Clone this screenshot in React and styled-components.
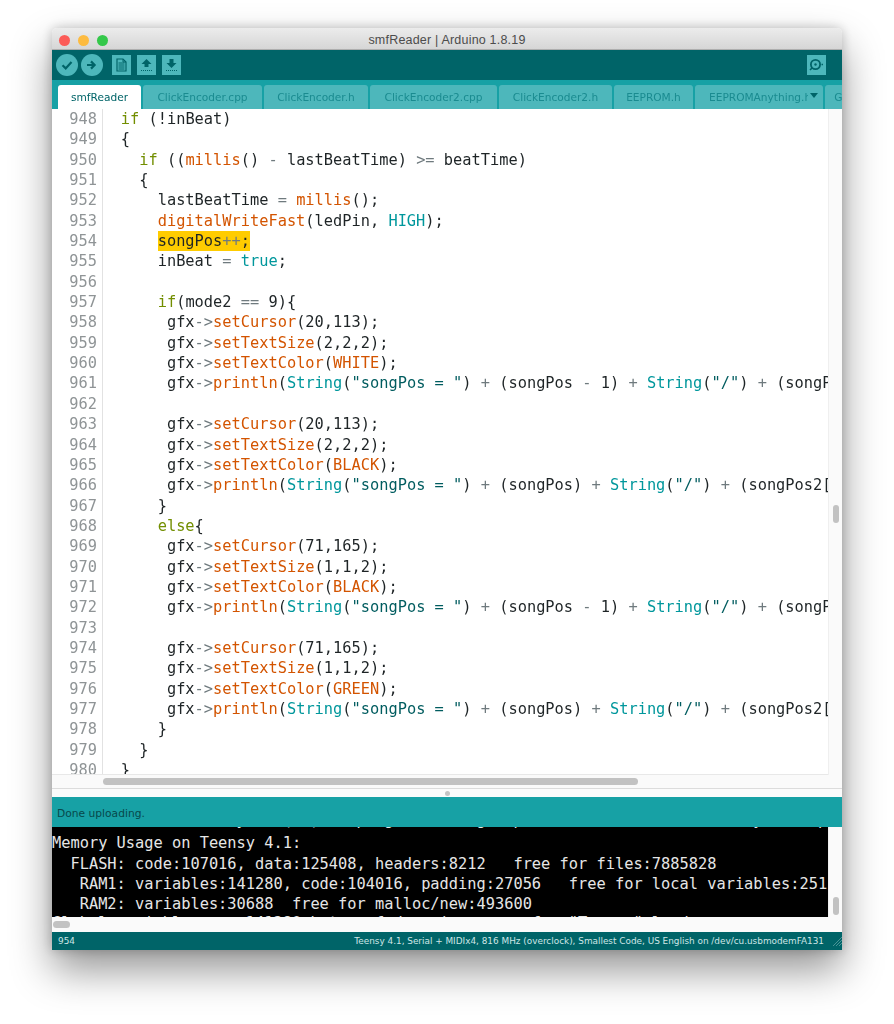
import React from 'react'
import styled, { createGlobalStyle } from 'styled-components'

const GlobalStyle = createGlobalStyle`
  html, body {
    margin: 0;
    background: #fff;
  }
`

const code = [
  '  if (!inBeat)',
  '  {',
  '    if ((millis() - lastBeatTime) >= beatTime)',
  '    {',
  '      lastBeatTime = millis();',
  '      digitalWriteFast(ledPin, HIGH);',
  '      @songPos++;',
  '      inBeat = true;',
  '',
  '      if(mode2 == 9){',
  '       gfx->setCursor(20,113);',
  '       gfx->setTextSize(2,2,2);',
  '       gfx->setTextColor(WHITE);',
  '       gfx->println(String("songPos = ") + (songPos - 1) + String("/") + (songPos2[0] - 1));',
  '',
  '       gfx->setCursor(20,113);',
  '       gfx->setTextSize(2,2,2);',
  '       gfx->setTextColor(BLACK);',
  '       gfx->println(String("songPos = ") + (songPos) + String("/") + (songPos2[0] - 1));',
  '      }',
  '      else{',
  '       gfx->setCursor(71,165);',
  '       gfx->setTextSize(1,1,2);',
  '       gfx->setTextColor(BLACK);',
  '       gfx->println(String("songPos = ") + (songPos - 1) + String("/") + (songPos2[0] - 1));',
  '',
  '       gfx->setCursor(71,165);',
  '       gfx->setTextSize(1,1,2);',
  '       gfx->setTextColor(GREEN);',
  '       gfx->println(String("songPos = ") + (songPos) + String("/") + (songPos2[0] - 1));',
  '      }',
  '    }',
  '  }',
]

const consoleLines = [
  'Sketch uses 240636 bytes (3%) of program storage space. Maximum is 8126464 bytes, applying limits.',
  'Memory Usage on Teensy 4.1:',
  '  FLASH: code:107016, data:125408, headers:8212   free for files:7885828',
  '   RAM1: variables:141280, code:104016, padding:27056   free for local variables:251',
  '   RAM2: variables:30688  free for malloc/new:493600',
  'Global variables use 141280 bytes of dynamic memory for "Teensy" loader.',
]

const tabs = [
  { label: 'smfReader', width: 83, active: true },
  { label: 'ClickEncoder.cpp', width: 119 },
  { label: 'ClickEncoder.h', width: 104 },
  { label: 'ClickEncoder2.cpp', width: 127 },
  { label: 'ClickEncoder2.h', width: 113 },
  { label: 'EEPROM.h', width: 79 },
  { label: 'EEPROMAnything.h', width: 128, menu: true },
  { label: 'GFX.h', width: 50 },
]

const tokenPattern = /("[^"]*"|\b(?:if|else)\b|\b(?:millis|digitalWriteFast|setCursor|setTextSize|setTextColor|println|WHITE|BLACK|GREEN)\b|\b(?:HIGH|true|String)\b|->|\+\+|>=|==|[-+=])/g

function kindOf(token) {
  if (token.startsWith('"')) return 'string'
  if (token === 'if' || token === 'else') return 'keyword'
  if (token === 'HIGH' || token === 'true' || token === 'String') return 'constant'
  if (/^[A-Za-z]/.test(token)) return 'call'
  return 'operator'
}

function CodeText({ text }) {
  const parts = text.split(tokenPattern)
  return parts.map((part, i) => (
    i % 2 === 1 ? <Token key={i} $kind={kindOf(part)}>{part}</Token> : part
  ))
}

function CodeLine({ text }) {
  const at = text.indexOf('@')
  if (at >= 0) {
    return (
      <Row>
        {text.slice(0, at)}
        <Mark><CodeText text={text.slice(at + 1)} /></Mark>
      </Row>
    )
  }
  return <Row><CodeText text={text} /></Row>
}

function RoundIcon({ children }) {
  return (
    <RoundButton>
      <svg width="22" height="22" viewBox="0 0 22 22">{children}</svg>
    </RoundButton>
  )
}

function SquareIcon({ children }) {
  return (
    <SquareButton>
      <svg width="19" height="20" viewBox="0 0 19 20">{children}</svg>
    </SquareButton>
  )
}

export default function App() {
  return (
    <Page>
      <GlobalStyle />
      <Window>
        <TitleBar>
          <Lights>
            <Light $color="#fc5b57" />
            <Light $color="#fdbb40" />
            <Light $color="#34c84a" />
          </Lights>
          <Title>smfReader | Arduino 1.8.19</Title>
        </TitleBar>

        <Toolbar>
          <RoundIcon>
            <path d="M6.5 11.2l3.2 3.2 5.8-6.4" fill="none" stroke="#006468" strokeWidth="2.2" />
          </RoundIcon>
          <RoundIcon>
            <path d="M6 11h6.5M10 7.4l3.6 3.6-3.6 3.6" fill="none" stroke="#006468" strokeWidth="2.2" />
          </RoundIcon>
          <SquareGroup>
            <SquareIcon>
              <path d="M5 4h6l3 3v9H5z" fill="none" stroke="#006468" strokeWidth="1.2" />
              <path d="M6.5 8h6M6.5 10h6M6.5 12h6M6.5 14h6M11 4v3h3" fill="none" stroke="#006468" />
            </SquareIcon>
            <SquareIcon>
              <path d="M9.5 4l5 5h-3v3h-4V9h-3z" fill="#006468" />
              <path d="M4 15.5h11" stroke="#006468" strokeDasharray="1 1" fill="none" />
            </SquareIcon>
            <SquareIcon>
              <path d="M9.5 13l5-5h-3V4h-4v4h-3z" fill="#006468" />
              <path d="M4 15.5h11" stroke="#006468" strokeDasharray="1 1" fill="none" />
            </SquareIcon>
          </SquareGroup>
          <SerialButton>
            <svg width="19" height="20" viewBox="0 0 19 20">
              <circle cx="8.5" cy="9.5" r="4.6" fill="none" stroke="#006468" strokeWidth="1.8" />
              <circle cx="8.5" cy="9.5" r="1.2" fill="#006468" />
              <path d="M5 13l-2 2M14.5 9.5h1.5" stroke="#006468" strokeWidth="1.6" fill="none" />
            </svg>
          </SerialButton>
        </Toolbar>

        <TabStrip>
          {tabs.map((tab) => (
            <Tab key={tab.label} $width={tab.width} $active={tab.active} $menu={tab.menu}>
              <TabLabel>{tab.label}</TabLabel>
              {tab.menu && <TabArrow />}
            </Tab>
          ))}
        </TabStrip>

        <EditorRow>
          <Editor>
            <Gutter>
              {code.map((_, i) => <Row key={i}>{948 + i}</Row>)}
            </Gutter>
            <CodeArea>
              {code.map((line, i) => <CodeLine key={i} text={line} />)}
            </CodeArea>
          </Editor>
          <VTrack $thumbTop={396}><VThumb /></VTrack>
        </EditorRow>

        <HTrack $left={51}>
          <HThumb $width={535} />
        </HTrack>

        <Divider><Grip /></Divider>

        <StatusBar>Done uploading.</StatusBar>

        <ConsoleRow>
          <Console>
            {consoleLines.map((line, i) => <ConsoleLine key={i}>{line}</ConsoleLine>)}
          </Console>
          <VTrack $thumbTop={70}><VThumb /></VTrack>
        </ConsoleRow>

        <HTrack $left={1} $short>
          <HThumb $width={17} />
        </HTrack>

        <Footer>
          <span>954</span>
          <FooterRight>
            Teensy 4.1, Serial + MIDIx4, 816 MHz (overclock), Smallest Code, US English on /dev/cu.usbmodemFA131
          </FooterRight>
          <svg width="10" height="10" viewBox="0 0 10 10">
            <path d="M10 1L1 10M10 4L4 10M10 7L7 10" stroke="#4a9396" strokeWidth="1" fill="none" />
          </svg>
        </Footer>
      </Window>
    </Page>
  )
}

const Page = styled.div`
  padding: 28px 52px 74px;
  width: 790px;
  height: 922px;
`

const Window = styled.div`
  display: flex;
  flex-direction: column;
  width: 790px;
  height: 922px;
  overflow: hidden;
  border-radius: 5px 5px 0 0;
  background: #fafafa;
  box-shadow: 0 20px 40px rgba(0, 0, 0, 0.42), 0 0 12px rgba(0, 0, 0, 0.22);
  filter: blur(0.35px);
`

const TitleBar = styled.div`
  display: grid;
  grid-template-columns: 1fr auto 1fr;
  align-items: center;
  box-sizing: border-box;
  height: 22px;
  padding-top: 3px;
  flex: none;
  background: linear-gradient(#ececec, #d6d6d6);
  border-bottom: 1px solid #aeaeae;
`

const Lights = styled.div`
  display: flex;
  gap: 8px;
  padding-left: 7px;
`

const Light = styled.span`
  width: 11px;
  height: 11px;
  border-radius: 50%;
  background: ${(p) => p.$color};
`

const Title = styled.div`
  font: 12.5px "Liberation Sans", Arial, sans-serif;
  color: #4c4c4c;
  letter-spacing: 0.2px;
`

const Toolbar = styled.div`
  display: flex;
  align-items: center;
  gap: 3px;
  height: 30px;
  flex: none;
  padding: 0 16px 0 4px;
  background: #006468;
`

const RoundButton = styled.div`
  display: flex;
  width: 22px;
  height: 22px;
  border-radius: 50%;
  background: #4db7bb;
`

const SquareButton = styled.div`
  display: flex;
  width: 19px;
  height: 20px;
  background: #4db7bb;
`

const SquareGroup = styled.div`
  display: flex;
  gap: 6px;
  margin-left: 6px;
  flex: 1;
`

const SerialButton = styled(SquareButton)``

const TabStrip = styled.div`
  display: flex;
  align-items: flex-end;
  gap: 2px;
  height: 29px;
  flex: none;
  padding-left: 6px;
  background: #17a1a5;
`

const Tab = styled.div`
  display: flex;
  align-items: center;
  justify-content: center;
  gap: 2px;
  flex: none;
  box-sizing: border-box;
  width: ${(p) => p.$width}px;
  height: 24px;
  padding: 0 ${(p) => (p.$menu ? '5px 0 14px' : '6px')};
  border-radius: 3px 3px 0 0;
  background: ${(p) => (p.$active ? '#fff' : '#4db7bb')};
  color: ${(p) => (p.$active ? '#006468' : '#1a8b90')};
  font: 10.6px "DejaVu Sans", Verdana, sans-serif;
`

const TabLabel = styled.span`
  overflow: hidden;
  white-space: nowrap;
`

const TabArrow = styled.span`
  flex: none;
  width: 0;
  height: 0;
  margin-bottom: 3px;
  border-left: 4px solid transparent;
  border-right: 4px solid transparent;
  border-top: 5px solid #006468;
`

const monoText = `
  font-family: "DejaVu Sans Mono", "Liberation Mono", monospace;
  font-size: 15.34px;
  line-height: 20.35px;
  white-space: pre;
`

const EditorRow = styled.div`
  display: flex;
  height: 666px;
  flex: none;
`

const Editor = styled.div`
  display: flex;
  flex: 1;
  min-width: 0;
  overflow: hidden;
  background: #fff;
  border-bottom: 1px solid #e8e8e8;
  ${monoText}
`

const Gutter = styled.div`
  flex: none;
  box-sizing: border-box;
  width: 51px;
  padding-right: 5px;
  border-right: 1px solid #e2e2e2;
  color: #8f9496;
  text-align: right;
`

const CodeArea = styled.div`
  flex: 1;
  min-width: 0;
  overflow: hidden;
  margin-left: -0.7px;
  color: #1e2426;
`

const Row = styled.div`
  height: 20.35px;
`

const Mark = styled.span`
  display: inline-block;
  background: #ffcc00;
`

const tokenColors = {
  string: '#005c5f',
  keyword: '#728e00',
  constant: '#00979c',
  call: '#d35400',
  operator: '#6f7a7e',
}

const Token = styled.span`
  color: ${(p) => tokenColors[p.$kind]};
`

const VTrack = styled.div`
  flex: none;
  box-sizing: border-box;
  width: 14px;
  padding: ${(p) => p.$thumbTop}px 3px 0 4px;
  background: #fafafa;
  border-left: 1px solid #efefef;
`

const VThumb = styled.div`
  height: 18px;
  border-radius: 4px;
  background: #c2c2c2;
`

const HTrack = styled.div`
  display: flex;
  align-items: center;
  flex: none;
  height: ${(p) => (p.$short ? 15 : 13)}px;
  padding-left: ${(p) => p.$left}px;
  background: #fafafa;
`

const HThumb = styled.div`
  width: ${(p) => p.$width}px;
  height: 7px;
  border-radius: 4px;
  background: #c2c2c2;
`

const Divider = styled.div`
  display: flex;
  align-items: center;
  justify-content: center;
  flex: none;
  height: 9px;
  background: #fbfbfb;
  border-top: 1px solid #dcdcdc;
  box-sizing: border-box;
`

const Grip = styled.span`
  width: 5px;
  height: 5px;
  border-radius: 50%;
  background: #c4c4c4;
`

const StatusBar = styled.div`
  display: flex;
  align-items: center;
  flex: none;
  height: 30px;
  padding-left: 5px;
  padding-top: 2px;
  box-sizing: border-box;
  background: #17a1a5;
  color: #07484b;
  font: 10.7px "DejaVu Sans", Verdana, sans-serif;
`

const ConsoleRow = styled.div`
  display: flex;
  flex: none;
  height: 90px;
`

const Console = styled.div`
  flex: 1;
  min-width: 0;
  overflow: hidden;
  background: #000;
  color: #e6e6e6;
  ${monoText}
`

const ConsoleLine = styled.div`
  height: 20.35px;

  &:first-child {
    margin-top: -17px;
    margin-bottom: 3px;
  }

  &:last-child {
    margin-top: -2px;
  }
`

const Footer = styled.div`
  display: flex;
  align-items: center;
  flex: none;
  height: 18px;
  padding-left: 6px;
  background: #006468;
  color: #cfe6e6;
  font: 8.9px "DejaVu Sans", Verdana, sans-serif;
`

const FooterRight = styled.span`
  flex: 1;
  text-align: right;
  padding-right: 8px;
  white-space: nowrap;
`
